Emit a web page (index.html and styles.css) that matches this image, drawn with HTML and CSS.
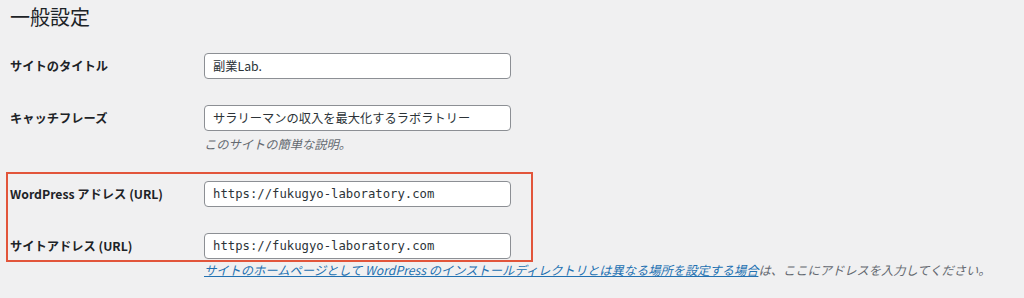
FILE: index.html
```html
<!DOCTYPE html>
<html lang="ja">
<head>
<meta charset="utf-8">
<title>一般設定</title>
<link rel="stylesheet" href="styles.css">
</head>
<body>
<div class="wrap">
  <h1 class="title">一般設定</h1>
  <div class="form">
    <div class="row">
      <div class="label">サイトのタイトル</div>
      <div class="field"><div class="input">副業Lab.</div></div>
    </div>
    <div class="row">
      <div class="label">キャッチフレーズ</div>
      <div class="field">
        <div class="input">サラリーマンの収入を最大化するラボラトリー</div>
        <p class="desc">このサイトの簡単な説明。</p>
      </div>
    </div>
    <div class="highlight">
      <div class="row">
        <div class="label">WordPress アドレス (URL)</div>
        <div class="field"><div class="input mono">https://fukugyo-laboratory.com</div></div>
      </div>
      <div class="row last">
        <div class="label">サイトアドレス (URL)</div>
        <div class="field"><div class="input mono">https://fukugyo-laboratory.com</div></div>
      </div>
    </div>
    <div class="row note-row">
      <div class="label"></div>
      <p class="desc note"><a href="#">サイトのホームページとして WordPress のインストールディレクトリとは異なる場所を設定する場合</a>は、ここにアドレスを入力してください。</p>
    </div>
  </div>
</div>
</body>
</html>
```

FILE: styles.css
```css
html, body {
  margin: 0;
  padding: 0;
  background: #f0f0f1;
}
body {
  font-family: "Noto Sans CJK JP", "Noto Sans", sans-serif;
  color: #1d2327;
  font-size: 12.25px;
}
.wrap {
  padding-left: 10px;
}
.title {
  font-size: 20px;
  font-weight: 400;
  line-height: 26px;
  margin: 0;
  padding-top: 4px;
  margin-bottom: 10px;
  color: #1d2327;
}
.form {
  display: flex;
  flex-direction: column;
}
.row {
  display: flex;
  align-items: flex-start;
  padding: 13px 0;
}
.row.last {
  padding-bottom: 0;
}
.label {
  width: 194px;
  flex: none;
  font-weight: 700;
  height: 26px;
  line-height: 26px;
  font-size: 12.25px;
}
.field {
  display: flex;
  flex-direction: column;
}
.input {
  box-sizing: border-box;
  width: 307px;
  height: 26px;
  border: 1px solid #8c8f94;
  border-radius: 4px;
  background: #fff;
  padding: 0 8px;
  line-height: 24px;
  color: #2c3338;
  font-size: 12.25px;
}
.input.mono {
  font-family: "DejaVu Sans Mono", "Liberation Mono", monospace;
  font-size: 12.25px;
}
.desc {
  margin: 4px 0 0;
  font-style: italic;
  color: #646970;
  line-height: 18px;
  font-size: 12.25px;
}
.highlight {
  position: relative;
  margin-top: 2px;
}
.highlight::before {
  content: "";
  position: absolute;
  left: -4px;
  top: 4px;
  width: 527px;
  height: 90px;
  border: 2px solid #e2553b;
  box-sizing: border-box;
}
.note-row {
  padding: 2px 0 0;
}
.note-row .label {
  height: auto;
}
.note {
  margin: 0;
}
.note a {
  color: #2271b1;
  text-decoration: underline;
}
```
